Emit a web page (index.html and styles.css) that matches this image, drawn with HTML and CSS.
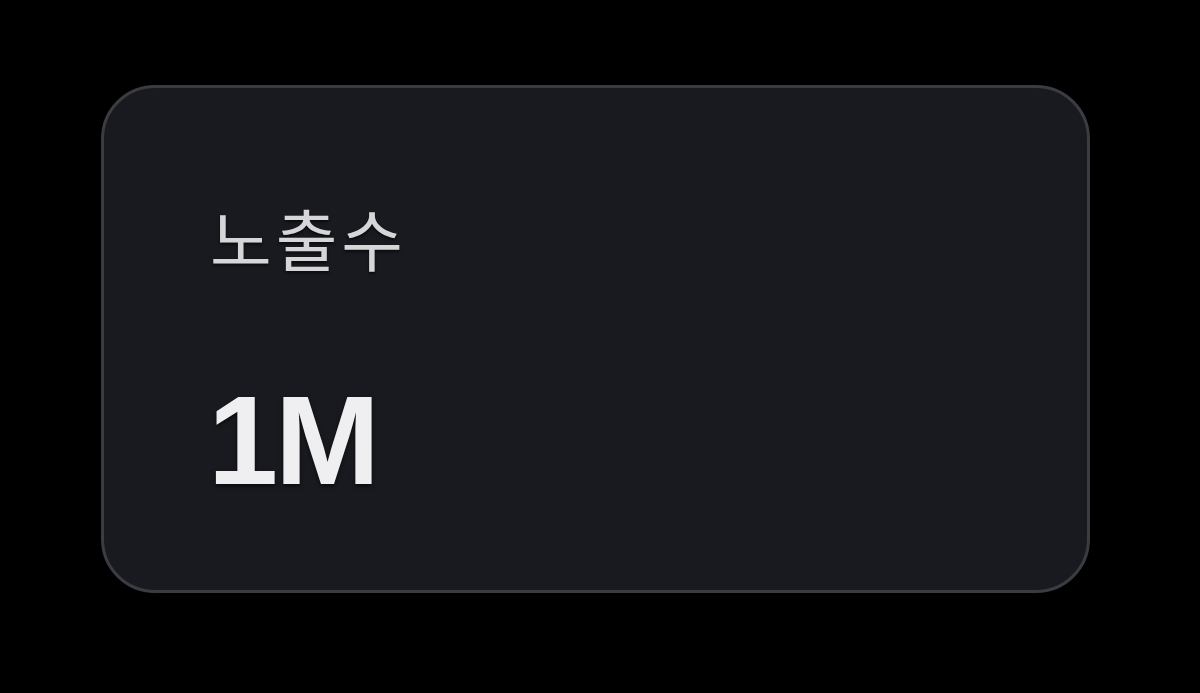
FILE: index.html
```html
<!DOCTYPE html>
<html lang="ko">

<head>
    <meta charset="UTF-8" />
    <meta name="viewport" content="width=device-width, initial-scale=1" />
    <title>노출수</title>
    <link rel="stylesheet" href="styles.css">
</head>

<body>

    <!-- STAT CARD -->
    <main class="page">
        <section class="stat-card">
            <div class="stat-label">노출수</div>
            <div class="stat-value">1M</div>
        </section>
    </main>

</body>

</html>
```

FILE: styles.css
```css
* {
    box-sizing: border-box;
}

body {
    margin: 0;
    background: #000;
    font-family: "Liberation Sans", "Noto Sans CJK KR", sans-serif;
}

.page {
    padding: 85px 0 0 101px;
}

/* --- CARD --- */
.stat-card {
    width: 989px;
    height: 508px;
    background: #191a1f;
    border: 3px solid #3b3c41;
    border-radius: 54px;
    padding: 115px 0 0 104px;
    display: flex;
    flex-direction: column;
    gap: 108px;
}

.stat-label {
    font-family: "Noto Sans CJK KR", sans-serif;
    font-size: 67px;
    font-weight: 400;
    line-height: 1;
    letter-spacing: 4px;
    color: #d6d6d8;
    padding-left: 2px;
    text-shadow: 0 2px 3px rgba(0, 0, 0, 0.6);
}

.stat-value {
    font-size: 126px;
    font-weight: bold;
    line-height: 1;
    color: #efeff1;
    letter-spacing: -3px;
    text-shadow: 0 2px 4px rgba(0, 0, 0, 0.6);
}
```
